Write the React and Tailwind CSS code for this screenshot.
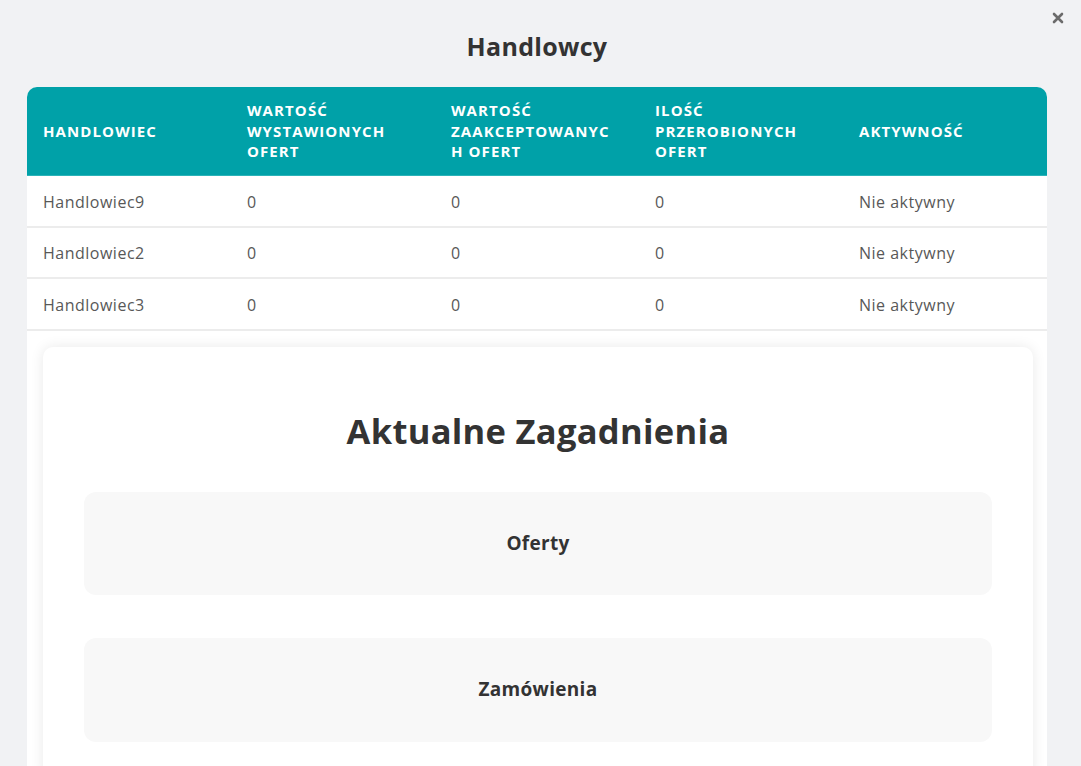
import React from "react";

const rows = [
  { name: "Handlowiec9", a: 0, b: 0, c: 0, status: "Nie aktywny" },
  { name: "Handlowiec2", a: 0, b: 0, c: 0, status: "Nie aktywny" },
  { name: "Handlowiec3", a: 0, b: 0, c: 0, status: "Nie aktywny" },
];

const headers = [
  ["HANDLOWIEC"],
  ["WARTOŚĆ", "WYSTAWIONYCH", "OFERT"],
  ["WARTOŚĆ", "ZAAKCEPTOWANYC", "H OFERT"],
  ["ILOŚĆ", "PRZEROBIONYCH", "OFERT"],
  ["AKTYWNOŚĆ"],
];

const CloseIcon = () => (
  <svg width="12" height="12" viewBox="0 0 12 12">
    <path d="M2 2 L10 10 M10 2 L2 10" stroke="#6b6b6b" strokeWidth="2.6" strokeLinecap="round" />
  </svg>
);

const App = () => {
  return (
    <div className="relative min-h-screen bg-[#f1f2f4] font-['Open_Sans',sans-serif] overflow-hidden">
      <button className="absolute top-[12px] right-[17px]">
        <CloseIcon />
      </button>

      <div className="w-[1020px] ml-[27px]">
        <h1 className="pt-[29px] text-center text-[25px] leading-[34px] font-bold tracking-[0.3px] text-[#333]">Handlowcy</h1>

        <div className="mt-[24px] bg-white rounded-t-[10px] overflow-hidden h-[700px]">
          {/* table header */}
          <div className="grid grid-cols-5 h-[89px] bg-[#00a1a8] border-b border-[#2bb3b8]">
            {headers.map((lines, i) => (
              <div key={i} className="flex items-center pl-[16px]">
                <div className="text-white font-bold text-[15px] leading-[20.5px] tracking-[1.1px] whitespace-nowrap">
                  {lines.map((l) => (
                    <div key={l}>{l}</div>
                  ))}
                </div>
              </div>
            ))}
          </div>

          {/* table body */}
          {rows.map((r) => (
            <div key={r.name} className="grid grid-cols-5 h-[51.5px] pt-[2px] border-b-2 border-[#ececec] text-[16px] tracking-[0.5px] text-[#585858]">
              <div className="flex items-center pl-[16px]">{r.name}</div>
              <div className="flex items-center pl-[16px]">{r.a}</div>
              <div className="flex items-center pl-[16px]">{r.b}</div>
              <div className="flex items-center pl-[16px]">{r.c}</div>
              <div className="flex items-center pl-[16px]">{r.status}</div>
            </div>
          ))}

          {/* current issues card */}
          <div className="pl-[16px] pr-[14px] pt-[16px]">
            <div className="bg-white rounded-[10px] shadow-[0_0_14px_rgba(0,0,0,0.09)] px-[41px] pt-[62px] pb-[40px]">
              <h2 className="text-center text-[34.5px] leading-[44px] font-bold tracking-[0.3px] text-[#333]">Aktualne Zagadnienia</h2>
              <div className="mt-[39px] flex flex-col gap-[43px]">
                <div className="h-[103px] rounded-[12px] bg-[#f8f8f8] flex items-center justify-center">
                  <span className="text-[19px] font-bold tracking-[0.3px] text-[#333]">Oferty</span>
                </div>
                <div className="h-[104px] rounded-[12px] bg-[#f8f8f8] flex items-center justify-center">
                  <span className="text-[19px] font-bold tracking-[0.3px] text-[#333]">Zamówienia</span>
                </div>
              </div>
            </div>
          </div>
        </div>
      </div>
    </div>
  );
};

export default App;
